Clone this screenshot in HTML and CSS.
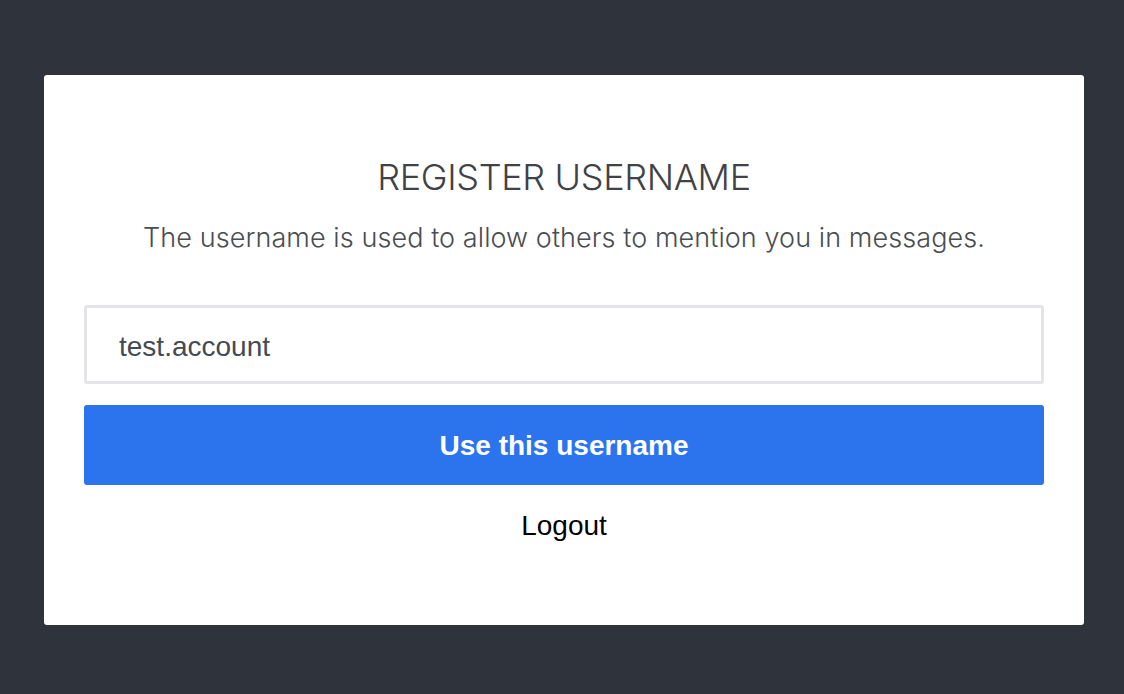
FILE: index.html
```html
<!DOCTYPE html>
<html>
<head>
<meta charset="utf-8">
<link rel="stylesheet" href="styles.css">
</head>
<body>
<div class="page">
  <div class="card">
    <h1 class="title">REGISTER USERNAME</h1>
    <p class="subtitle">The username is used to allow others to mention you in messages.</p>
    <input class="field" type="text" value="test.account">
    <button class="primary">Use this username</button>
    <a class="logout">Logout</a>
  </div>
</div>
</body>
</html>
```
FILE: styles.css
```css
html, body {
  margin: 0;
  padding: 0;
  height: 100%;
  background: #2f333c;
}
.page {
  display: flex;
  padding: 75px 0 0 44px;
}
.card {
  width: 1040px;
  height: 550px;
  box-sizing: border-box;
  background: #ffffff;
  border-radius: 3px;
  padding: 60px 40px 40px;
  display: flex;
  flex-direction: column;
  align-items: stretch;
}
.title {
  margin: 21px 0 0;
  font-family: "Inter", "Liberation Sans", sans-serif;
  font-weight: 300;
  font-size: 36px;
  line-height: 42px;
  letter-spacing: -0.35px;
  color: #3f4247;
  text-align: center;
}
.subtitle {
  margin: 23px 0 0;
  font-family: "Inter", "Liberation Sans", sans-serif;
  font-weight: 300;
  font-size: 27px;
  line-height: 33px;
  letter-spacing: 0.08px;
  color: #4a4d52;
  text-align: center;
}
.field {
  margin-top: 51px;
  height: 79px;
  box-sizing: border-box;
  border: 3px solid #e3e5e8;
  border-radius: 3px;
  padding: 5px 32px 0;
  font-family: "Liberation Sans", Arial, sans-serif;
  font-size: 28px;
  color: #434a54;
  outline: none;
}
.primary {
  margin-top: 21px;
  height: 80px;
  border: none;
  border-radius: 3px;
  padding-top: 3px;
  background: #2c74ed;
  color: #ffffff;
  font-family: "Liberation Sans", Arial, sans-serif;
  font-weight: bold;
  font-size: 28px;
}
.logout {
  margin-top: 25px;
  font-family: "Liberation Sans", Arial, sans-serif;
  font-size: 28px;
  line-height: 32px;
  color: #000000;
  text-align: center;
}
```
